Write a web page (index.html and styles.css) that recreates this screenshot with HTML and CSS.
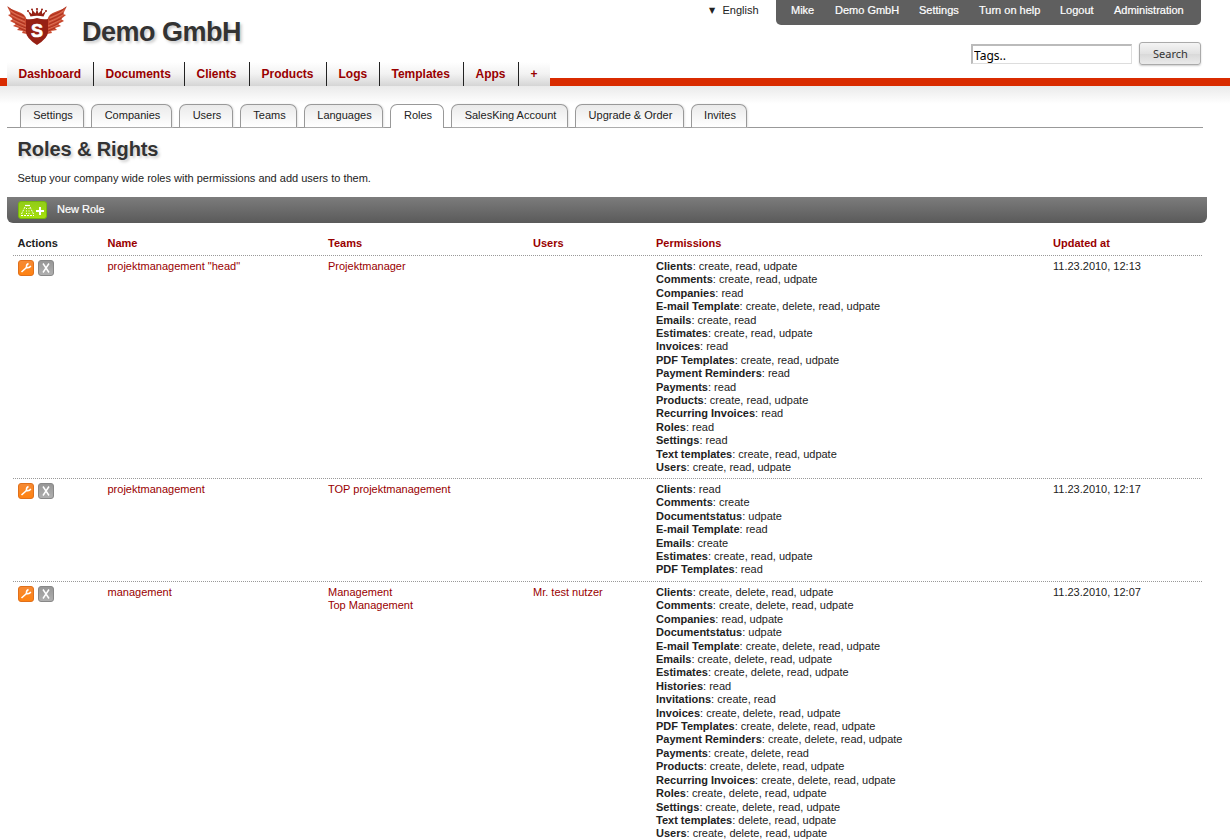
FILE: index.html
```html
<!DOCTYPE html>
<html lang="en">
<head>
<meta charset="utf-8">
<title>Roles &amp; Rights</title>
<link rel="stylesheet" href="styles.css">
</head>
<body>
<header class="header">
  <div class="brand">
    <svg class="logo" viewBox="0 0 60 40" width="60" height="40">
      <g id="wing">
        <path fill="#c9492f" d="M0 0 C5 5 14 5 18 10 C21 14 20 22 20 28 L15 27 L16 25 L10 24 L12 22 L6 20 L9 18 L3 15 L6 13 L1 9 L4 8 Z"/>
        <path fill="none" stroke="#e58a70" stroke-width=".6" d="M2 4 Q9 9 17 12 M4 9 Q10 13 18 16 M6 14 Q12 17 19 20 M9 19 Q14 21 19 23 M13 24 L19 26"/>
        <path fill="none" stroke="#9e2516" stroke-width=".7" d="M1 1 Q7 7 17 10 M3 7 Q10 11 18 14 M5 12 Q11 15 18 18 M8 17 Q13 20 19 22 M12 22 L19 25"/>
      </g>
      <use href="#wing" transform="translate(60 0) scale(-1 1)"/>
      <path fill="#962014" d="M19 13 Q24 14 30 12 Q36 14 41 13 V26 Q41 32 30 39 Q19 32 19 26 Z"/>
      <path fill="#962014" d="M23.500 10.500 L21 5 L25 8 L25 3.500 L28.500 7.500 L30 3 L31.500 7.500 L35 3.500 L35 8 L39 5 L36.500 10.500 Q30 9 23.500 10.500 Z"/>
      <g fill="#962014"><circle cx="21" cy="5" r="1"/><circle cx="25" cy="3.500" r="1"/><circle cx="30" cy="3" r="1.100"/><circle cx="35" cy="3.500" r="1"/><circle cx="39" cy="5" r="1"/></g>
      <text class="logo-letter" x="30" y="30.500" text-anchor="middle">S</text>
    </svg>
    <h1 class="company">Demo GmbH</h1>
  </div>
  <div class="tools">
    <div class="account">
      <span class="language"><span class="arrow">▼</span>English</span>
      <nav class="user-menu">
        <a class="u1">Mike</a><a class="u2">Demo GmbH</a><a class="u3">Settings</a><a class="u4">Turn on help</a><a class="u5">Logout</a><a class="u6">Administration</a>
      </nav>
    </div>
    <form class="search">
      <input class="search-field" type="text" value="Tags.." aria-label="Tags">
      <button class="search-button" type="button">Search</button>
    </form>
  </div>
</header>
<div class="nav-bar">
  <nav class="main-nav">
    <a class="n1">Dashboard</a><a class="n2">Documents</a><a class="n3">Clients</a><a class="n4">Products</a><a class="n5">Logs</a><a class="n6">Templates</a><a class="n7">Apps</a><a class="n8">+</a>
  </nav>
</div>
<div class="sub-bar">
  <nav class="tabs">
    <a class="t1">Settings</a><a class="t2">Companies</a><a class="t3">Users</a><a class="t4">Teams</a><a class="t5">Languages</a><a class="t6 active">Roles</a><a class="t7">SalesKing Account</a><a class="t8">Upgrade &amp; Order</a><a class="t9">Invites</a>
  </nav>
</div>
<main class="content">
  <h2 class="title">Roles &amp; Rights</h2>
  <p class="intro">Setup your company wide roles with permissions and add users to them.</p>
  <div class="action-bar">
    <svg width="29" height="18" viewBox="0 0 29 18">
      <defs><linearGradient id="green" x2="0" y2="1"><stop stop-color="#91cc19"/><stop offset="1" stop-color="#a6e00b"/></linearGradient></defs>
      <rect x=".5" y=".5" width="28" height="17" rx="2.500" fill="url(#green)" stroke="#78b80c"/>
      <path fill="none" stroke="#fff" stroke-width="1.200" d="M7 4.500 H12"/>
      <path fill="none" stroke="#fff" stroke-width="1" stroke-dasharray="2 1" d="M7 6 L3.500 13 M12 6 L15.500 13 M3 14.500 H16"/>
      <path fill="none" stroke="#fff" stroke-width="1" stroke-dasharray="1 1.500" d="M8.500 7 V14 M11 7 V14"/>
      <path stroke="#fff" stroke-width="2" d="M18 10 H26 M22 6 V14"/>
    </svg>
    <span>New Role</span>
  </div>
  <section class="roles">
    <div class="row head">
      <span class="plain">Actions</span><span>Name</span><span>Teams</span><span>Users</span><span>Permissions</span><span>Updated at</span>
    </div>
    <div class="row r1">
      <div class="icons">
        <svg width="16" height="16" viewBox="0 0 16 16"><defs><linearGradient id="orange" x2="0" y2="1"><stop stop-color="#f58a35"/><stop offset="1" stop-color="#ff8210"/></linearGradient><g id="edit"><rect x=".5" y=".5" width="15" height="15" rx="2.500" fill="url(#orange)" stroke="#e0701b"/><path fill="none" stroke="#fff" stroke-width="1.600" d="M3.500 12 L8.500 7.500"/><path fill="none" stroke="#fff" stroke-width="1.500" d="M10.500 3.500 Q8 4.500 8.500 7.500 Q11.500 8.300 12.800 5.800"/></g></defs><use href="#edit"/></svg>
        <svg width="16" height="16" viewBox="0 0 16 16"><defs><linearGradient id="gray" x2="0" y2="1"><stop stop-color="#969696"/><stop offset="1" stop-color="#b0b0b0"/></linearGradient><g id="remove"><rect x=".5" y=".5" width="15" height="15" rx="2.500" fill="url(#gray)" stroke="#888"/><path fill="none" stroke="#fff" stroke-width="1.500" d="M5 3.500 L11 12.500 M11 3.500 L5 12.500"/></g></defs><use href="#remove"/></svg>
      </div>
      <a>projektmanagement "head"</a><a>Projektmanager</a><a></a>
      <div><b>Clients</b>: create, read, udpate<br><b>Comments</b>: create, read, udpate<br><b>Companies</b>: read<br><b>E-mail Template</b>: create, delete, read, udpate<br><b>Emails</b>: create, read<br><b>Estimates</b>: create, read, udpate<br><b>Invoices</b>: read<br><b>PDF Templates</b>: create, read, udpate<br><b>Payment Reminders</b>: read<br><b>Payments</b>: read<br><b>Products</b>: create, read, udpate<br><b>Recurring Invoices</b>: read<br><b>Roles</b>: read<br><b>Settings</b>: read<br><b>Text templates</b>: create, read, udpate<br><b>Users</b>: create, read, udpate</div>
      <div class="date">11.23.2010, 12:13</div>
    </div>
    <div class="row r2">
      <div class="icons"><svg width="16" height="16"><use href="#edit"/></svg><svg width="16" height="16"><use href="#remove"/></svg></div>
      <a>projektmanagement</a><a>TOP projektmanagement</a><a></a>
      <div><b>Clients</b>: read<br><b>Comments</b>: create<br><b>Documentstatus</b>: udpate<br><b>E-mail Template</b>: read<br><b>Emails</b>: create<br><b>Estimates</b>: create, read, udpate<br><b>PDF Templates</b>: read</div>
      <div class="date">11.23.2010, 12:17</div>
    </div>
    <div class="row r3">
      <div class="icons"><svg width="16" height="16"><use href="#edit"/></svg><svg width="16" height="16"><use href="#remove"/></svg></div>
      <a>management</a><a>Management<br>Top Management</a><a>Mr. test nutzer</a>
      <div><b>Clients</b>: create, delete, read, udpate<br><b>Comments</b>: create, delete, read, udpate<br><b>Companies</b>: read, udpate<br><b>Documentstatus</b>: udpate<br><b>E-mail Template</b>: create, delete, read, udpate<br><b>Emails</b>: create, delete, read, udpate<br><b>Estimates</b>: create, delete, read, udpate<br><b>Histories</b>: read<br><b>Invitations</b>: create, read<br><b>Invoices</b>: create, delete, read, udpate<br><b>PDF Templates</b>: create, delete, read, udpate<br><b>Payment Reminders</b>: create, delete, read, udpate<br><b>Payments</b>: create, delete, read<br><b>Products</b>: create, delete, read, udpate<br><b>Recurring Invoices</b>: create, delete, read, udpate<br><b>Roles</b>: create, delete, read, udpate<br><b>Settings</b>: create, delete, read, udpate<br><b>Text templates</b>: delete, read, udpate<br><b>Users</b>: create, delete, read, udpate</div>
      <div class="date">11.23.2010, 12:07</div>
    </div>
  </section>
</main>
</body>
</html>
```
FILE: styles.css
```css
* { box-sizing: border-box; }
body { margin: 0; height: 839px; overflow: hidden; background: #fff; color: #222; font: 11px/13.4px "Liberation Sans", Arial, sans-serif; }
.header { display: flex; justify-content: space-between; height: 62px; padding: 0 29px 0 7px; }
.brand { display: flex; gap: 15px; padding-top: 6px; }
.logo-letter { font: bold 18px "Liberation Sans", Arial, sans-serif; fill: #fff; stroke: #fff; stroke-width: .6px; }
.company { margin: 9px 0 0; font-size: 27px; letter-spacing: -.5px; line-height: 34px; color: #333; text-shadow: 2px 2px 3px #ccc; }
.tools { display: flex; flex-direction: column; align-items: flex-end; }
.account { display: flex; }
.language { width: 67px; padding-top: 4px; white-space: nowrap; }
.arrow { display: inline-block; width: 13.5px; font: 8px/10px "DejaVu Sans", sans-serif; vertical-align: 1px; }
.user-menu { display: flex; width: 425px; height: 25px; padding: 4px 0 0 15px; background: #5f5f5f; border-radius: 0 0 5px 5px; color: #fff; white-space: nowrap; -webkit-text-stroke: .2px #fff; }
.u1 { width: 44px; } .u2 { width: 84px; } .u3 { width: 60px; } .u4 { width: 81px; } .u5 { width: 54px; }
.search { display: flex; align-items: center; gap: 7px; margin-top: 17px; }
.search-field { width: 161px; height: 20px; margin-top: 1px; padding: 1px 0 0 1px; border: 1px solid #ddd; border-top: 2px solid #bbb; border-left: 2px solid #bbb; border-radius: 0; font: 12px "Noto Sans", sans-serif; color: #000; }
.search-button { width: 62px; height: 23px; padding: 0 0 0 1px; border: 1px solid #aaa; border-radius: 3px; background: linear-gradient(#f4f4f4, #e2e2e2 50%, #d8d8d8 51%, #eaeaea); box-shadow: 0 1px 2px #ccc; font: 11px "Noto Sans", sans-serif; color: #333; }
.nav-bar { height: 24px; padding-left: 7px; background: linear-gradient(#fff 16px, #d92b00 16px); }
.main-nav { display: flex; width: 543px; height: 24px; background: linear-gradient(#fff, #f2f2f2 50%, #d5d5d5); }
.main-nav a { padding-left: 11.5px; border-right: 1px solid #222; color: #900; font-size: 12px; font-weight: bold; line-height: 24px; white-space: nowrap; }
.main-nav a:last-child { border: 0; }
.n1 { width: 87px; } .n2 { width: 91px; } .n3 { width: 65px; } .n4 { width: 77px; } .n5 { width: 53px; } .n6 { width: 84px; } .n7 { width: 55px; } .n8 { width: 31px; }
.sub-bar { height: 42px; padding: 0 27px 0 7px; background: linear-gradient(#eaeaea, #fff 18px); }
.tabs { display: flex; align-items: flex-end; gap: 7px; height: 42px; padding-left: 13px; border-bottom: 1px solid #999; }
.tabs a { height: 23px; border: 1px solid #999; border-bottom: 0; border-radius: 7px 7px 0 0; background: linear-gradient(#eaeaea, #fff); box-shadow: 1px 0 2px #e4e4e4; line-height: 21px; text-align: center; white-space: nowrap; padding-left: 2px; }
.tabs .active { height: 24px; margin-bottom: -1px; background: #fff; box-shadow: none; }
.t1 { width: 64px; } .t2 { width: 81px; } .t3 { width: 54px; } .t4 { width: 57px; } .t5 { width: 79px; } .t6 { width: 54px; } .t7 { width: 117px; } .t8 { width: 109px; } .t9 { width: 56px; }
.content { padding: 0 23px 0 7px; }
.title { margin: 0; padding: 10px 0 0 10.5px; height: 44px; font-size: 20px; letter-spacing: -.1px; line-height: 22px; color: #333; text-shadow: 2px 2px 3px #ccc; }
.intro { margin: 0; padding-left: 10.5px; height: 25px; }
.action-bar { display: flex; align-items: center; gap: 10px; height: 26px; padding-left: 11px; background: linear-gradient(#7c7c7c, #5a5a5a); border-radius: 0 0 6px 6px; color: #fff; -webkit-text-stroke: .2px #fff; }
.action-bar span { padding-bottom: 1px; }
.roles { margin: 0 5px 0 6px; }
.row { display: grid; grid-template-columns: 90px 220.500px 205px 123px 397px 1fr; padding: 4px 0 0 4.500px; background: repeating-linear-gradient(90deg, #999 0 1px, transparent 1px 2px) bottom / 100% 1px no-repeat; white-space: nowrap; }
.row a, .head { color: #900; }
.head { height: 33px; padding-top: 14px; font-weight: bold; }
.head .plain { color: #222; }
.icons { display: flex; gap: 4px; }
.r1 { height: 223px; } .r2 { height: 103px; } .r3 { height: 264px; }
```
